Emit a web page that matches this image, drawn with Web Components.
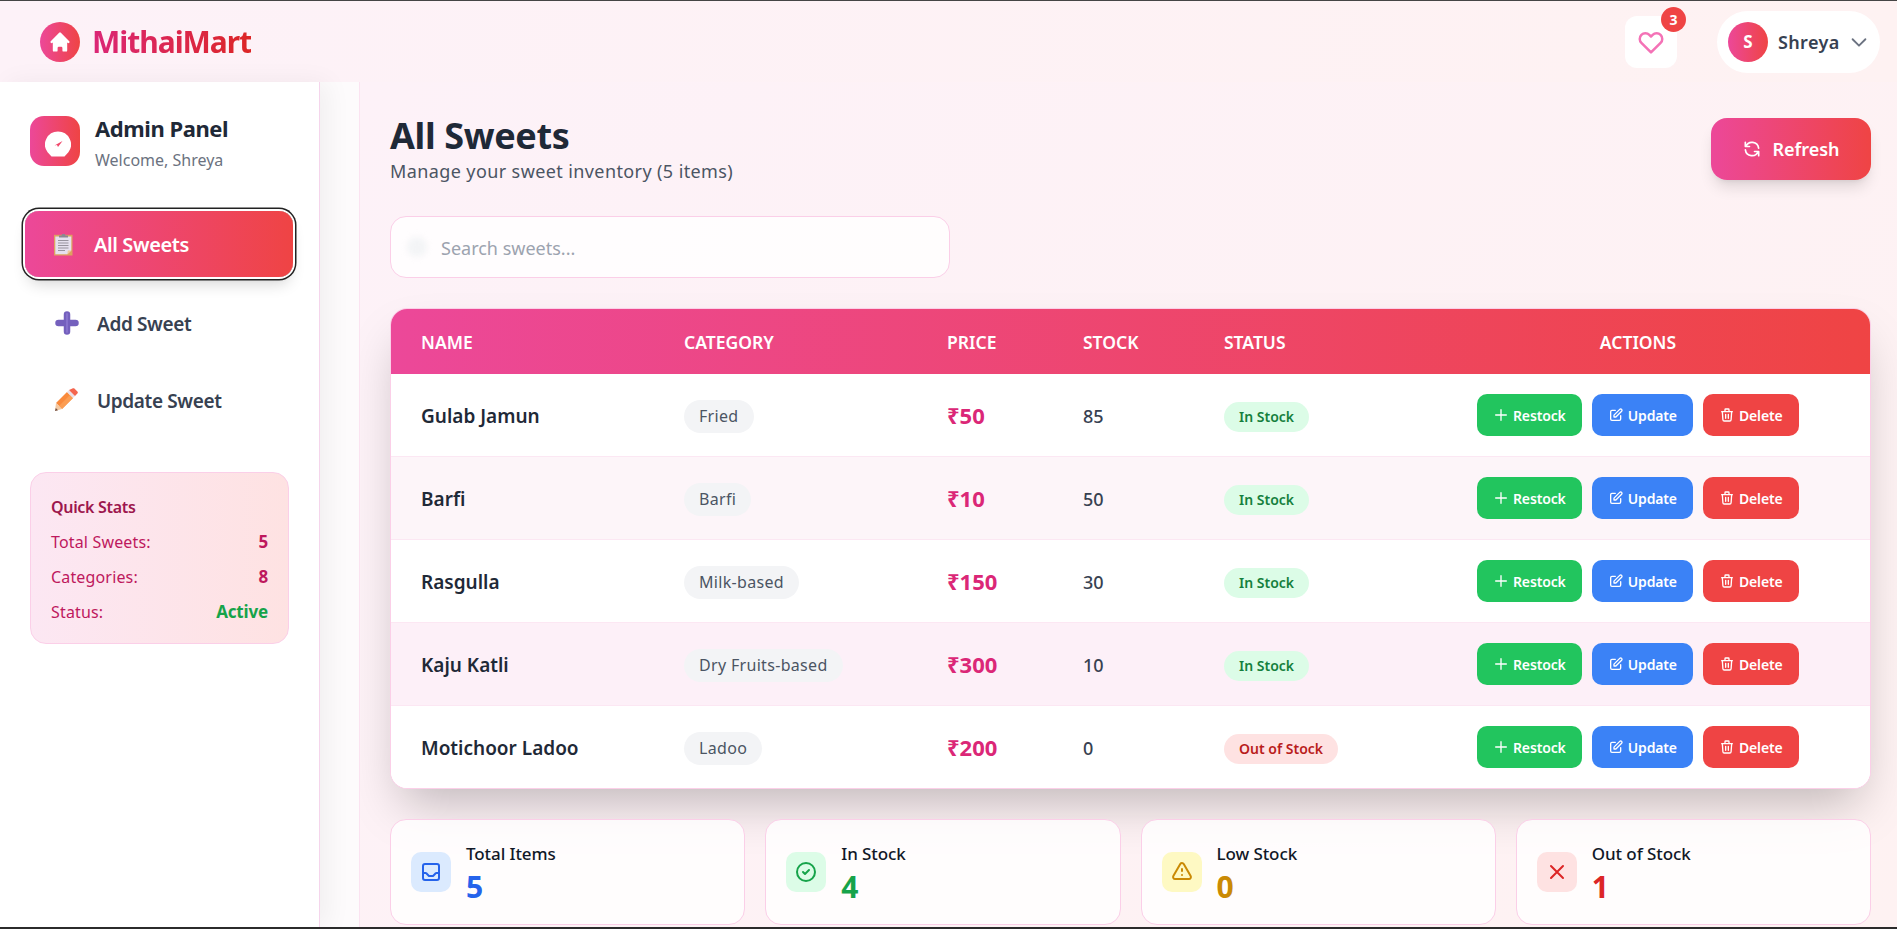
<!DOCTYPE html>
<html lang="en">
<head>
<meta charset="utf-8">
<title>MithaiMart</title>
<style>
html, body { margin: 0; padding: 0; height: 100%; overflow: hidden; }
body { font-family: "Noto Sans", "Open Sans", sans-serif; color: #1f2937; }
</style>
</head>
<body>
<admin-app>
    <app-header slot="header" user="Shreya"></app-header>
    <admin-sidebar slot="sidebar" user="Shreya">
        <nav-item active label="All Sweets">
            <svg slot="icon" viewBox="0 0 24 24" width="24" height="24">
                <rect x="4" y="2.800" width="18.500" height="20.700" fill="#dda35f"/>
                <path d="M5.300 4.500h16v14l-4 3.800h-12z" fill="#e6e0ef"/>
                <path d="M17.300 22.300l.6-3.800h3.400z" fill="#f0c89a"/>
                <path d="M8 8.500h10.500M8 11h10.500M8 13.500h10.500M8 16h10.500M8 18.500h7" stroke="#98939f" stroke-width="1"/>
                <path d="M9 5.500V3.500h2.500l.8-1.500h2.400l.8 1.500H18v2z" fill="#8b8793"/>
            </svg>
        </nav-item>
        <nav-item label="Add Sweet">
            <svg slot="icon" viewBox="0 0 24 24" width="24" height="24">
                <path d="M12 3.500v17M3.500 12h17" stroke="#7460bd" stroke-width="6.500" stroke-linecap="round"/>
                <path d="M12 3v18" stroke="#8672cc" stroke-width="2" stroke-linecap="round"/>
            </svg>
        </nav-item>
        <nav-item label="Update Sweet">
            <svg slot="icon" viewBox="0 0 24 24" width="24" height="24">
                <path d="M1 15L12 4l6 6L7 21z" fill="#f98a3c"/>
                <path d="M4 18L15 7l3 3L7 21z" fill="#fb9d52"/>
                <path d="M12 4l6 6 2-2-6-6z" fill="#e9dfe8"/>
                <path d="M14 2l6 6 2.400-2.400c.6-.6.6-1.400 0-2L19.400.6c-.6-.6-1.400-.6-2 0z" fill="#f4654e"/>
                <path d="M1 15l6 6-7 2z" fill="#f3c9a2"/>
                <path d="M.8 20L0 23l3-.8z" fill="#6d4c41"/>
            </svg>
        </nav-item>
    </admin-sidebar>
    <div slot="main">
        <page-head title-text="All Sweets" subtitle="Manage your sweet inventory (5 items)"></page-head>
        <search-box placeholder="Search sweets..."></search-box>
        <sweets-table>
            <sweet-row name="Gulab Jamun" category="Fried" price="₹50" stock="85" status="In Stock"></sweet-row>
            <sweet-row name="Barfi" category="Barfi" price="₹10" stock="50" status="In Stock" tint="even"></sweet-row>
            <sweet-row name="Rasgulla" category="Milk-based" price="₹150" stock="30" status="In Stock"></sweet-row>
            <sweet-row name="Kaju Katli" category="Dry Fruits-based" price="₹300" stock="10" status="In Stock" tint="hover"></sweet-row>
            <sweet-row name="Motichoor Ladoo" category="Ladoo" price="₹200" stock="0" status="Out of Stock" last></sweet-row>
        </sweets-table>
        <stat-grid>
            <stat-card label="Total Items" value="5" kind="blue">
                <svg viewBox="0 0 24 24" width="24" height="24" fill="none" stroke="currentColor" stroke-width="2" stroke-linecap="round" stroke-linejoin="round"><path d="M20 13V6a2 2 0 00-2-2H6a2 2 0 00-2 2v7m16 0v5a2 2 0 01-2 2H6a2 2 0 01-2-2v-5m16 0h-2.586a1 1 0 00-.707.293l-2.414 2.414a1 1 0 01-.707.293h-3.172a1 1 0 01-.707-.293l-2.414-2.414A1 1 0 006.586 13H4"/></svg>
            </stat-card>
            <stat-card label="In Stock" value="4" kind="green">
                <svg viewBox="0 0 24 24" width="24" height="24" fill="none" stroke="currentColor" stroke-width="2" stroke-linecap="round" stroke-linejoin="round"><path d="M9 12l2 2 4-4m6 2a9 9 0 11-18 0 9 9 0 0118 0z"/></svg>
            </stat-card>
            <stat-card label="Low Stock" value="0" kind="yellow">
                <svg viewBox="0 0 24 24" width="24" height="24" fill="none" stroke="currentColor" stroke-width="2" stroke-linecap="round" stroke-linejoin="round"><path d="M12 9v2m0 4h.01m-6.938 4h13.856c1.54 0 2.502-1.667 1.732-3L13.732 4c-.77-1.333-2.694-1.333-3.464 0L3.340 16c-.77 1.333.192 3 1.732 3z"/></svg>
            </stat-card>
            <stat-card label="Out of Stock" value="1" kind="red">
                <svg viewBox="0 0 24 24" width="24" height="24" fill="none" stroke="currentColor" stroke-width="2" stroke-linecap="round" stroke-linejoin="round"><path d="M6 18L18 6M6 6l12 12"/></svg>
            </stat-card>
        </stat-grid>
    </div>
</admin-app>

<script>
const GRADIENT = 'linear-gradient(90deg, #ec4899, #ef4444)';

// small helper, every element here is just a template in an open shadow root
function define(tag, html, setup) {
    const template = document.createElement('template');
    template.innerHTML = html;
    customElements.define(tag, class extends HTMLElement {
        constructor() {
            super();
            this.attachShadow({mode: 'open'});
            this.shadowRoot.appendChild(template.content.cloneNode(true));
        }
        connectedCallback() {
            this.shadowRoot.querySelectorAll('[data-attr]').forEach((el) => {
                el.textContent = this.getAttribute(el.dataset.attr);
            });
            if (setup) setup(this, this.shadowRoot);
        }
    });
}

define('admin-app', `
<style>
:host { display: flex; flex-direction: column; box-sizing: border-box; height: 929px; overflow: hidden;
    border-top: 1px solid #454545; border-bottom: 2px solid #2b2b2b; }
.body { flex: 1; display: flex; min-height: 0; }
.side { flex: none; width: 320px; display: block; position: relative; z-index: 1; }
.gutter { flex: none; width: 39px; background: #fdfbfc; }
.main { flex: 1; min-width: 0; overflow: hidden; padding: 30px 26px 0 30px; border-left: 1px solid #fbe3f1;
    background: linear-gradient(135deg, #fdf2f8, #fef2f2); }
</style>
<slot name="header"></slot>
<div class="body">
    <div class="side"><slot name="sidebar"></slot></div>
    <div class="gutter"></div>
    <div class="main"><slot name="main"></slot></div>
</div>
`);

define('app-header', `
<style>
:host { display: flex; flex: none; height: 81px; align-items: center; justify-content: space-between; box-sizing: border-box;
    padding: 0 17px 0 40px; background: linear-gradient(90deg, #fdf2f8, #fef2f2); }
.brand, .right, .user { display: flex; align-items: center; }
.logo { width: 40px; height: 40px; border-radius: 50%; background: ${GRADIENT}; display: flex; align-items: center; justify-content: center; }
.name { margin-left: 12px; font-size: 30px; font-weight: 700; letter-spacing: -0.034em; color: transparent;
    background: linear-gradient(90deg, #db2777, #dc2626); -webkit-background-clip: text; background-clip: text; }
.fav { position: relative; width: 52px; height: 52px; border-radius: 12px; background: #fff; display: flex; align-items: center; justify-content: center; color: #f472b6; margin-right: 40px; }
.badge { position: absolute; top: -9px; right: -9px; width: 25px; height: 25px; border-radius: 50%; background: #ef4444; color: #fff;
    font-size: 14px; font-weight: 700; display: flex; align-items: center; justify-content: center; }
.user { width: 163px; height: 62px; box-sizing: border-box; padding: 0 10px 0 11px; background: #fff; border-radius: 31px; }
.avatar { flex: none; width: 40px; height: 40px; border-radius: 50%; background: ${GRADIENT}; color: #fff; font-weight: 700; font-size: 17px; display: flex; align-items: center; justify-content: center; }
.uname { flex: 1; margin: 0 0 0 10px; font-size: 18px; font-weight: 600; letter-spacing: 0.02em; color: #374151; }
svg { display: block; }
</style>
<div class="brand">
    <div class="logo"><svg viewBox="0 0 20 20" width="24" height="24" fill="#fff"><path d="M10.707 2.293a1 1 0 00-1.414 0l-7 7a1 1 0 001.414 1.414L4 10.414V17a1 1 0 001 1h2a1 1 0 001-1v-2a1 1 0 011-1h2a1 1 0 011 1v2a1 1 0 001 1h2a1 1 0 001-1v-6.586l.293.293a1 1 0 001.414-1.414l-7-7z"/></svg></div>
    <span class="name">MithaiMart</span>
</div>
<div class="right">
    <div class="fav">
        <svg viewBox="0 0 24 24" width="30" height="30" fill="none" stroke="currentColor" stroke-width="2" stroke-linecap="round" stroke-linejoin="round"><path d="M4.318 6.318a4.500 4.500 0 000 6.364L12 20.364l7.682-7.682a4.500 4.500 0 00-6.364-6.364L12 7.636l-1.318-1.318a4.500 4.500 0 00-6.364 0z"/></svg>
        <span class="badge">3</span>
    </div>
    <div class="user">
        <span class="avatar">S</span>
        <span class="uname" data-attr="user"></span>
        <svg viewBox="0 0 24 24" width="22" height="22" fill="none" stroke="#6b7280" stroke-width="2" stroke-linecap="round" stroke-linejoin="round"><path d="M19 9l-7 7-7-7"/></svg>
    </div>
</div>
`);

define('admin-sidebar', `
<style>
:host { display: flex; flex-direction: column; box-sizing: border-box; height: 100%; background: #fff; border-right: 1px solid #f5d5ec;
    padding: 34px 26px 0 25px; box-shadow: 8px 0 24px rgba(0,0,0,.05); }
.panel { display: flex; align-items: flex-start; gap: 15px; height: 50px; margin: 0 0 45px 5px; }
.mark { flex: none; width: 50px; height: 50px; border-radius: 14px; background: ${GRADIENT}; display: flex; align-items: center; justify-content: center; }
.mark svg { margin: 6px 0 0 5px; }
.who { margin-top: -2px; }
.title { font-size: 22px; font-weight: 700; letter-spacing: -0.02em; color: #1f2937; line-height: 28px; }
.sub { font-size: 16px; color: #6b7280; line-height: 26px; margin-top: 5px; }
nav { display: flex; flex-direction: column; gap: 11px; }
.stats { margin: 39px 4px 0 5px; padding: 22px 20px 0; height: 172px; box-sizing: border-box; border: 1px solid #fbcfe8; border-radius: 16px;
    background: linear-gradient(90deg, #fce7f3, #fee2e2); font-size: 16px; color: #be185d; }
.stats h4 { margin: 0 0 10.700px; font-size: 16px; font-weight: 600; letter-spacing: -0.02em; color: #9d174d; line-height: 24px; }
.line { display: flex; justify-content: space-between; line-height: 24px; margin-bottom: 11px; letter-spacing: 0.01em; }
.line b { font-weight: 700; font-size: 17px; letter-spacing: -0.01em; }
.ok { color: #16a34a; }
svg { display: block; }
</style>
<div class="panel">
    <div class="mark"><svg viewBox="0 0 26 26" width="26" height="26"><path d="M13 .5a13 13 0 0 1 10.400 20.800L19.500 25.500h-13L2.600 21.300A13 13 0 0 1 13 .5z" fill="#fff"/><path d="M9.500 14.500L17.500 10l-4.500 6-1-2z" fill="#f0476a"/></svg></div>
    <div class="who">
        <div class="title">Admin Panel</div>
        <div class="sub">Welcome, <span data-attr="user"></span></div>
    </div>
</div>
<nav><slot></slot></nav>
<div class="stats">
    <h4>Quick Stats</h4>
    <div class="line"><span>Total Sweets:</span><b>5</b></div>
    <div class="line"><span>Categories:</span><b>8</b></div>
    <div class="line"><span>Status:</span><b class="ok">Active</b></div>
</div>
`);

define('nav-item', `
<style>
:host { display: flex; align-items: center; height: 66px; box-sizing: border-box; padding-left: 30px; gap: 18px; border-radius: 14px;
    font-size: 19px; font-weight: 600; letter-spacing: -0.02em; color: #374151; }
:host([active]) { background: ${GRADIENT}; color: #fff; font-size: 20px; padding-left: 25px; gap: 20px; margin-bottom: 2px;
    box-shadow: 0 0 0 2px #fff, 0 0 0 3.500px #222, 0 10px 15px -3px rgba(0,0,0,.16), 0 4px 6px -4px rgba(0,0,0,.1); }
span { padding-top: 1px; }
::slotted(svg) { display: block; }
</style>
<slot name="icon"></slot><span data-attr="label"></span>
`);

define('page-head', `
<style>
:host { display: flex; justify-content: space-between; align-items: flex-start; margin-bottom: 32px; }
.text { margin-top: 2px; }
h1 { margin: 0; font-size: 36px; line-height: 44px; font-weight: 700; letter-spacing: -0.01em; color: #1f2937; }
p { margin: 0; font-size: 18px; line-height: 26px; letter-spacing: 0.022em; color: #4b5563; }
.refresh { display: flex; align-items: center; gap: 10px; height: 62px; width: 160px; justify-content: center; box-sizing: border-box; margin-top: 6px;
    border-radius: 16px; background: ${GRADIENT}; color: #fff; font-size: 18px; font-weight: 600; box-shadow: 0 10px 15px -3px rgba(0,0,0,.12), 0 4px 6px -4px rgba(0,0,0,.1); }
</style>
<div class="text">
    <h1 data-attr="title-text"></h1>
    <p data-attr="subtitle"></p>
</div>
<div class="refresh">
    <svg viewBox="0 0 24 24" width="20" height="20" fill="none" stroke="#fff" stroke-width="2" stroke-linecap="round" stroke-linejoin="round"><path d="M4 4v5h.582m15.356 2A8.001 8.001 0 004.582 9m0 0H9m11 11v-5h-.581m0 0a8.003 8.003 0 01-15.357-2m15.357 2H15"/></svg>
    <span>Refresh</span>
</div>
`);

define('search-box', `
<style>
:host { display: flex; align-items: center; box-sizing: border-box; width: 560px; height: 62px; margin: 0 0 30px; padding-left: 16px; gap: 14px;
    background: rgba(255,255,255,.8); border: 1px solid #fbcfe8; border-radius: 16px; }
.glass { width: 20px; height: 20px; border-radius: 50%; background: #f3f4f6; filter: blur(3px); }
span { font-size: 18px; color: #9ca3af; padding-top: 2px; }
</style>
<div class="glass"></div><span data-attr="placeholder"></span>
`);

define('sweets-table', `
<style>
:host { display: block; --cols: 263px 263px 136px 141px 212px 1fr; border: 1px solid #fbcfe8; border-radius: 17px; background: #fff;
    box-shadow: 0 25px 50px -12px rgba(0,0,0,.25); }
.wrap { border-radius: 16px; overflow: hidden; }
.head { display: grid; grid-template-columns: var(--cols); height: 65px; align-items: center; background: ${GRADIENT}; color: #fff; font-size: 17.500px; font-weight: 600; text-transform: uppercase; }
.head span { padding-left: 30px; }
.head span:last-child { padding: 0; text-align: center; }
</style>
<div class="wrap">
    <div class="head"><span>Name</span><span>Category</span><span>Price</span><span>Stock</span><span>Status</span><span>Actions</span></div>
    <slot></slot>
</div>
`);

define('sweet-row', `
<style>
:host { display: grid; grid-template-columns: var(--cols); height: 83px; box-sizing: border-box; align-items: center; background: #fff;
    border-bottom: 1px solid #fce7f3; font-size: 18px; color: #374151; }
:host([tint="even"]) { background: #fdf5f9; }
:host([tint="hover"]) { background: #fdf0f8; }
:host([last]) { border-bottom: 0; height: 82px; }
.cell { padding-left: 30px; padding-top: 2px; }
.name { font-size: 19px; font-weight: 600; color: #1f2937; }
.pill { display: inline-block; padding: 0 15px; line-height: 33px; border-radius: 17px; background: #f3f4f6; color: #4b5563; font-size: 16px; letter-spacing: 0.02em; }
.price { font-size: 22px; font-weight: 700; color: #db2777; padding-top: 0; }
.stock { font-weight: 500; }
.status { display: inline-block; padding: 0 15px; line-height: 30px; border-radius: 15px; font-size: 14px; font-weight: 600; background: #dcfce7; color: #15803d; margin-top: 2px; }
.status.out { background: #fee2e2; color: #b91c1c; }
.actions { display: flex; gap: 10px; padding-left: 71px; }
</style>
<div class="cell name" data-attr="name"></div>
<div class="cell"><span class="pill" data-attr="category"></span></div>
<div class="cell price" data-attr="price"></div>
<div class="cell stock" data-attr="stock"></div>
<div class="cell"><span class="status" data-attr="status"></span></div>
<div class="actions">
    <action-btn color="#22c55e" label="Restock"><svg viewBox="0 0 24 24" width="16" height="16" fill="none" stroke="#fff" stroke-width="2" stroke-linecap="round" stroke-linejoin="round"><path d="M12 4v16m8-8H4"/></svg></action-btn>
    <action-btn color="#3b82f6" label="Update"><svg viewBox="0 0 24 24" width="16" height="16" fill="none" stroke="#fff" stroke-width="2" stroke-linecap="round" stroke-linejoin="round"><path d="M11 5H6a2 2 0 00-2 2v11a2 2 0 002 2h11a2 2 0 002-2v-5m-1.414-9.414a2 2 0 112.828 2.828L11.828 15H9v-2.828l8.586-8.586z"/></svg></action-btn>
    <action-btn color="#ef4444" label="Delete"><svg viewBox="0 0 24 24" width="16" height="16" fill="none" stroke="#fff" stroke-width="2" stroke-linecap="round" stroke-linejoin="round"><path d="M19 7l-.867 12.142A2 2 0 0116.138 21H7.862a2 2 0 01-1.995-1.858L5 7m5 4v6m4-6v6m1-10V4a1 1 0 00-1-1h-4a1 1 0 00-1 1v3M4 7h16"/></svg></action-btn>
</div>
`, (el, root) => {
    if (el.getAttribute('status') === 'Out of Stock') root.querySelector('.status').classList.add('out');
});

define('action-btn', `
<style>
:host { display: inline-flex; align-items: center; gap: 4px; height: 42px; box-sizing: border-box; padding: 0 16px; border-radius: 10px; color: #fff; font-size: 14px; font-weight: 600; letter-spacing: -0.01em; }
::slotted(svg) { display: block; }
</style>
<slot></slot><span data-attr="label"></span>
`, (el) => {
    el.style.background = el.getAttribute('color');
});

define('stat-grid', `
<style>
:host { display: grid; grid-template-columns: repeat(4, 1fr); gap: 20px; margin-top: 30px; }
</style>
<slot></slot>
`);

define('stat-card', `
<style>
:host { display: flex; align-items: center; gap: 15px; box-sizing: border-box; height: 106px; padding: 0 20px; background: rgba(255,255,255,.8); border: 1px solid #fbcfe8; border-radius: 16px; }
:host([kind="blue"]) { --bg: #dbeafe; --fg: #2563eb; }
:host([kind="green"]) { --bg: #dcfce7; --fg: #16a34a; }
:host([kind="yellow"]) { --bg: #fef9c3; --fg: #ca8a04; }
:host([kind="red"]) { --bg: #fee2e2; --fg: #dc2626; }
.icon { width: 40px; height: 40px; border-radius: 10px; background: var(--bg); color: var(--fg); display: flex; align-items: center; justify-content: center; }
.text { margin-top: 2px; }
.label { font-size: 17px; font-weight: 500; letter-spacing: -0.005em; color: #111827; line-height: 24px; }
.value { font-size: 30px; font-weight: 700; color: var(--fg); line-height: 36px; margin-top: 3px; }
::slotted(svg) { display: block; }
</style>
<div class="icon"><slot></slot></div>
<div class="text">
    <div class="label" data-attr="label"></div>
    <div class="value" data-attr="value"></div>
</div>
`);
</script>
</body>
</html>
